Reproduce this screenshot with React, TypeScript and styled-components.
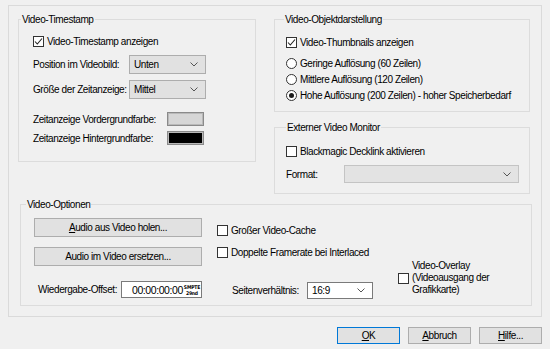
import { createGlobalStyle } from "styled-components";
import styled from "styled-components";

const GlobalStyle = createGlobalStyle`
  body {
    margin: 0;
    background: #f0f0f0;
    font-family: "Liberation Sans", Arial, sans-serif;
    font-size: 10px;
    letter-spacing: -0.42px;
    color: #000;
  }
`;

const Window = styled.div`
  width: 550px;
  height: 349px;
  box-sizing: border-box;
  padding: 5px 0 0 8px;
  overflow: hidden;
  background: #f0f0f0;
`;

const Page = styled.div`
  width: 534px;
  height: 312px;
  box-sizing: border-box;
  border: 1px solid #dadada;
  padding: 7px 0 0 9px;
`;

const TopRow = styled.div`
  display: flex;
  align-items: flex-start;
  gap: 18px;
`;

const RightColumn = styled.div`
  display: flex;
  flex-direction: column;
  gap: 9px;
`;

const Group = styled.fieldset<{ $w: number; $h: number; $mt?: number; $ml?: number }>`
  margin: ${(p) => p.$mt ?? 0}px 0 0 ${(p) => p.$ml ?? 0}px;
  padding: 0;
  min-width: 0;
  box-sizing: border-box;
  width: ${(p) => p.$w}px;
  height: ${(p) => p.$h}px;
  border: 1px solid #dcdcdc;
`;

const Legend = styled.legend<{ $indent: number }>`
  margin-left: ${(p) => p.$indent}px;
  padding: 0 1px;
  line-height: 13px;
`;

const GroupBody = styled.div<{ $pt: number; $pl: number }>`
  padding: ${(p) => p.$pt}px 0 0 ${(p) => p.$pl}px;
  display: flex;
  flex-direction: column;
  align-items: flex-start;
`;

const OptionsBody = styled.div`
  display: flex;
  padding-left: 13px;
`;

const CheckRow = styled.label<{ $mt?: number }>`
  display: flex;
  align-items: center;
  gap: 3px;
  height: 13px;
  line-height: 13px;
  margin-top: ${(p) => p.$mt ?? 0}px;
  white-space: nowrap;
`;

const Box = styled.span`
  display: inline-flex;
  align-items: center;
  justify-content: center;
  width: 11px;
  height: 11px;
  box-sizing: border-box;
  border: 1px solid #333;
  background: #fff;
  flex: none;
`;

const RadioCircle = styled.span`
  display: inline-flex;
  align-items: center;
  justify-content: center;
  width: 11px;
  height: 11px;
  box-sizing: border-box;
  border: 1px solid #333;
  border-radius: 50%;
  background: #fff;
  flex: none;
`;

const RadioDot = styled.span`
  width: 5px;
  height: 5px;
  border-radius: 50%;
  background: #1a1a1a;
`;

const FieldRow = styled.div<{ $mt?: number; $pl?: number }>`
  display: flex;
  align-items: center;
  margin-top: ${(p) => p.$mt ?? 0}px;
  padding-left: ${(p) => p.$pl ?? 0}px;
  white-space: nowrap;
`;

const FieldLabel = styled.span<{ $w: number }>`
  width: ${(p) => p.$w}px;
  flex: none;
`;

const Select = styled.div<{ $w: number; $h: number; $variant: "list" | "edit" | "disabled" }>`
  display: flex;
  align-items: center;
  justify-content: space-between;
  box-sizing: border-box;
  width: ${(p) => p.$w}px;
  height: ${(p) => p.$h}px;
  padding: 0 7px 0 4px;
  border: 1px solid
    ${(p) => (p.$variant === "edit" ? "#7a7a7a" : p.$variant === "disabled" ? "#c4c4c4" : "#adadad")};
  background: ${(p) => (p.$variant === "edit" ? "#fff" : p.$variant === "disabled" ? "#e3e3e3" : "#e1e1e1")};
`;

const Swatch = styled.span<{ $fill: string }>`
  width: 37px;
  height: 14px;
  box-sizing: border-box;
  border: 1px solid #8a8a8a;
  box-shadow: inset 0 0 0 1px #b9b9b9;
  background: ${(p) => p.$fill};
`;

const ColorRow = styled.div<{ $mt: number }>`
  display: flex;
  align-items: center;
  margin-top: ${(p) => p.$mt}px;
  white-space: nowrap;
`;

const Column = styled.div<{ $w: number; $pt: number; $ml?: number }>`
  display: flex;
  flex-direction: column;
  align-items: flex-start;
  width: ${(p) => p.$w}px;
  padding-top: ${(p) => p.$pt}px;
  margin-left: ${(p) => p.$ml ?? 0}px;
  flex: none;
`;

const Button = styled.div<{ $w: number; $h: number; $mt?: number; $focused?: boolean }>`
  display: flex;
  align-items: center;
  justify-content: center;
  box-sizing: border-box;
  width: ${(p) => p.$w}px;
  height: ${(p) => p.$h}px;
  margin-top: ${(p) => p.$mt ?? 0}px;
  border: 1px solid ${(p) => (p.$focused ? "#0078d7" : "#adadad")};
  background: #e1e1e1;
  white-space: nowrap;
  flex: none;
`;

const Mnemonic = styled.span`
  text-decoration: underline;
  text-underline-offset: 1px;
`;

const OffsetRow = styled.div`
  display: flex;
  align-items: center;
  justify-content: flex-end;
  gap: 4px;
  width: 100%;
  margin-top: 15px;
  white-space: nowrap;
`;

const TimeInput = styled.div`
  display: flex;
  align-items: center;
  justify-content: flex-end;
  gap: 1px;
  box-sizing: border-box;
  width: 81px;
  height: 17px;
  padding-right: 1px;
  border: 1px solid #7a7a7a;
  background: #fff;
  font-size: 10.5px;
`;

const Smpte = styled.span`
  display: flex;
  flex-direction: column;
  align-items: center;
  font-family: "DejaVu Sans Condensed", "Liberation Sans", sans-serif;
  font-weight: bold;
  font-size: 5px;
  line-height: 6px;
  letter-spacing: -0.2px;
`;

const OverlayRow = styled.label`
  display: flex;
  align-items: center;
  gap: 3px;
`;

const OverlayText = styled.span`
  line-height: 12px;
`;

const DialogButtons = styled.div`
  display: flex;
  justify-content: flex-end;
  gap: 8px;
  width: 534px;
  margin-top: 10px;
`;

function Chevron() {
  return (
    <svg width="8" height="5" viewBox="0 0 8 5">
      <polyline points="0.5,0.5 4,4 7.5,0.5" fill="none" stroke="#555" strokeWidth="1" />
    </svg>
  );
}

function Check({ checked, label, mt }: { checked?: boolean; label: string; mt?: number }) {
  return (
    <CheckRow $mt={mt}>
      <Box>
        {checked && (
          <svg width="9" height="9" viewBox="0 0 9 9">
            <polyline points="1,4.5 3.3,7 8,1.5" fill="none" stroke="#222" strokeWidth="1.1" />
          </svg>
        )}
      </Box>
      {label}
    </CheckRow>
  );
}

function Radio({ checked, label, mt }: { checked?: boolean; label: string; mt?: number }) {
  return (
    <CheckRow $mt={mt}>
      <RadioCircle>{checked && <RadioDot />}</RadioCircle>
      {label}
    </CheckRow>
  );
}

export default function App() {
  return (
    <>
      <GlobalStyle />
      <Window>
        <Page>
          <TopRow>
            <Group $w={238} $h={149}>
              <Legend $indent={2}>Video-Timestamp</Legend>
              <GroupBody $pt={9} $pl={14}>
                <Check checked label="Video-Timestamp anzeigen" />
                <FieldRow $mt={7}>
                  <FieldLabel $w={96}>Position im Videobild:</FieldLabel>
                  <Select $w={77} $h={19} $variant="list">
                    Unten
                    <Chevron />
                  </Select>
                </FieldRow>
                <FieldRow $mt={6}>
                  <FieldLabel $w={96}>Größe der Zeitanzeige:</FieldLabel>
                  <Select $w={77} $h={19} $variant="list">
                    Mittel
                    <Chevron />
                  </Select>
                </FieldRow>
                <ColorRow $mt={13}>
                  <FieldLabel $w={134}>Zeitanzeige Vordergrundfarbe:</FieldLabel>
                  <Swatch $fill="#d6d6d6" />
                </ColorRow>
                <ColorRow $mt={5}>
                  <FieldLabel $w={134}>Zeitanzeige Hintergrundfarbe:</FieldLabel>
                  <Swatch $fill="#000" />
                </ColorRow>
              </GroupBody>
            </Group>

            <RightColumn>
              <Group $w={256} $h={99}>
                <Legend $indent={9}>Video-Objektdarstellung</Legend>
                <GroupBody $pt={10} $pl={11}>
                  <Check checked label="Video-Thumbnails anzeigen" />
                  <Radio label="Geringe Auflösung (60 Zeilen)" mt={8} />
                  <Radio label="Mittlere Auflösung (120 Zeilen)" mt={3} />
                  <Radio checked label="Hohe Auflösung (200 Zeilen) - hoher Speicherbedarf" mt={3} />
                </GroupBody>
              </Group>

              <Group $w={256} $h={73}>
                <Legend $indent={11}>Externer Video Monitor</Legend>
                <GroupBody $pt={11} $pl={11}>
                  <Check label="Blackmagic Decklink aktivieren" />
                  <FieldRow $mt={7}>
                    <FieldLabel $w={58}>Format:</FieldLabel>
                    <Select $w={175} $h={18} $variant="disabled">
                      <span />
                      <Chevron />
                    </Select>
                  </FieldRow>
                </GroupBody>
              </Group>
            </RightColumn>
          </TopRow>

          <Group $w={512} $h={108} $mt={4} $ml={2}>
            <Legend $indent={5}>Video-Optionen</Legend>
            <OptionsBody>
              <Column $w={168} $pt={7}>
                <Button $w={168} $h={19}>
                  <span>
                    <Mnemonic>A</Mnemonic>udio aus Video holen...
                  </span>
                </Button>
                <Button $w={168} $h={19} $mt={10}>
                  Audio im Video ersetzen...
                </Button>
                <OffsetRow>
                  Wiedergabe-Offset:
                  <TimeInput>
                    00:00:00:00
                    <Smpte>
                      <span>SMPTE</span>
                      <span>29nd</span>
                    </Smpte>
                  </TimeInput>
                </OffsetRow>
              </Column>

              <Column $w={181} $pt={13} $ml={15}>
                <Check label="Großer Video-Cache" />
                <Check label="Doppelte Framerate bei Interlaced" mt={9} />
                <FieldRow $mt={23} $pl={15}>
                  <FieldLabel $w={75}>Seitenverhältnis:</FieldLabel>
                  <Select $w={66} $h={17} $variant="edit">
                    16:9
                    <Chevron />
                  </Select>
                </FieldRow>
              </Column>

              <Column $w={100} $pt={49}>
                <OverlayRow>
                  <Box />
                  <OverlayText>
                    Video-Overlay
                    <br />
                    (Videoausgang der
                    <br />
                    Grafikkarte)
                  </OverlayText>
                </OverlayRow>
              </Column>
            </OptionsBody>
          </Group>
        </Page>

        <DialogButtons>
          <Button $w={63} $h={17} $focused>
            <span>
              <Mnemonic>O</Mnemonic>K
            </span>
          </Button>
          <Button $w={63} $h={17}>
            <span>
              <Mnemonic>A</Mnemonic>bbruch
            </span>
          </Button>
          <Button $w={63} $h={17}>
            <span>
              <Mnemonic>H</Mnemonic>ilfe...
            </span>
          </Button>
        </DialogButtons>
      </Window>
    </>
  );
}
